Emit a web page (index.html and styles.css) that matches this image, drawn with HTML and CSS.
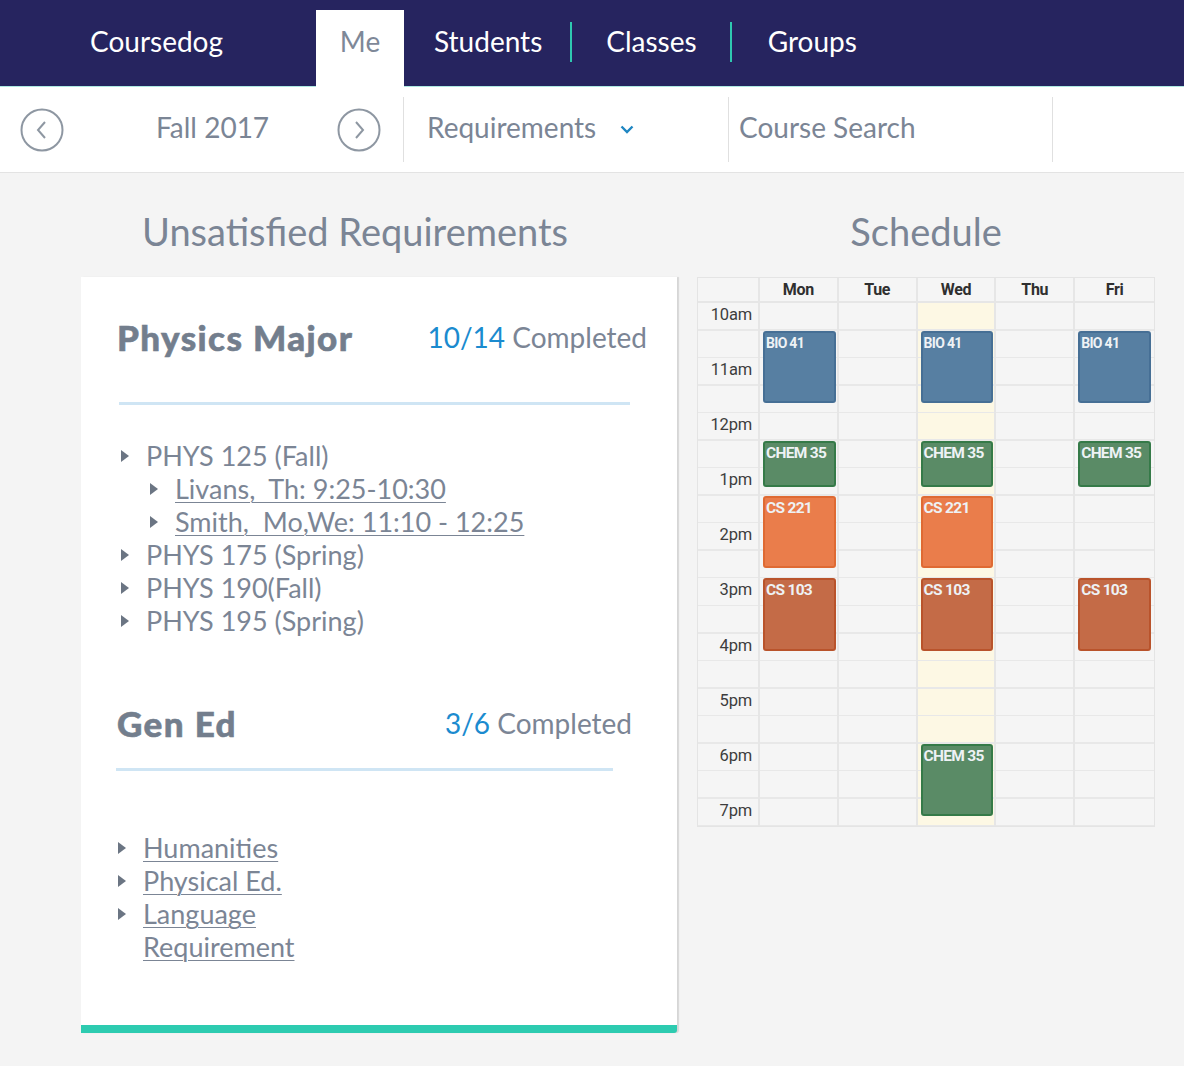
FILE: index.html
```html
<!DOCTYPE html>
<html lang="en">
<head>
<meta charset="utf-8">
<title>Coursedog</title>
<link rel="stylesheet" href="styles.css">
</head>
<body>
<header class="topnav">
  <div class="brand">Coursedog</div>
  <div class="tab tab-active">Me</div>
  <div class="navlink nav-students">Students</div>
  <div class="navsep sep-1"></div>
  <div class="navlink nav-classes">Classes</div>
  <div class="navsep sep-2"></div>
  <div class="navlink nav-groups">Groups</div>
</header>

<nav class="subbar">
  <div class="term">
    <span class="circle-btn">
      <svg viewBox="0 0 44 44" width="44" height="44"><circle cx="22" cy="22" r="20.5" fill="none" stroke="#8e97a2" stroke-width="2"/><path d="M25 14 L18 22 L25 30" fill="none" stroke="#8e97a2" stroke-width="2"/></svg>
    </span>
    <span class="term-label">Fall 2017</span>
    <span class="circle-btn">
      <svg viewBox="0 0 44 44" width="44" height="44"><circle cx="22" cy="22" r="20.5" fill="none" stroke="#8e97a2" stroke-width="2"/><path d="M19 14 L26 22 L19 30" fill="none" stroke="#8e97a2" stroke-width="2"/></svg>
    </span>
  </div>
  <div class="divider"></div>
  <div class="dropdown">
    <span class="sub-label">Requirements</span>
    <svg class="chev" viewBox="0 0 14 9" width="14" height="9"><path d="M1.5 1.5 L7 7 L12.5 1.5" fill="none" stroke="#1f86c2" stroke-width="2.4"/></svg>
  </div>
  <div class="divider"></div>
  <div class="search"><span class="sub-label">Course Search</span></div>
  <div class="divider"></div>
</nav>

<main class="content">
  <section class="left-col">
    <h1 class="page-title title-left">Unsatisfied Requirements</h1>
    <div class="card">
      <div class="req-head head-physics">
        <h2 class="req-name">Physics Major</h2>
        <div class="req-count"><span class="num">10/14</span> Completed</div>
      </div>
      <div class="req-rule rule-physics"></div>
      <ul class="req-list list-physics">
        <li class="item"><span class="tri"></span>PHYS 125 (Fall)</li>
        <li class="item sub"><span class="tri"></span><a href="#">Livans,&nbsp; Th: 9:25-10:30</a></li>
        <li class="item sub"><span class="tri"></span><a href="#">Smith,&nbsp; Mo,We: 11:10 - 12:25</a></li>
        <li class="item"><span class="tri"></span>PHYS 175 (Spring)</li>
        <li class="item"><span class="tri"></span>PHYS 190(Fall)</li>
        <li class="item"><span class="tri"></span>PHYS 195 (Spring)</li>
      </ul>

      <div class="req-head head-gened">
        <h2 class="req-name">Gen Ed</h2>
        <div class="req-count"><span class="num">3/6</span> Completed</div>
      </div>
      <div class="req-rule rule-gened"></div>
      <ul class="req-list list-gened">
        <li class="item"><span class="tri"></span><a href="#">Humanities</a></li>
        <li class="item"><span class="tri"></span><a href="#">Physical Ed.</a></li>
        <li class="item"><span class="tri"></span><a href="#">Language<br>Requirement</a></li>
      </ul>
    </div>
  </section>

  <section class="right-col">
    <h1 class="page-title title-right">Schedule</h1>
    <div class="cal">
      <div class="cal-head">
        <div class="ch"></div>
        <div class="ch">Mon</div>
        <div class="ch">Tue</div>
        <div class="ch">Wed</div>
        <div class="ch">Thu</div>
        <div class="ch">Fri</div>
      </div>
      <div class="cal-body">
        <div class="col col-time"></div>
        <div class="col col-d1"></div>
        <div class="col col-d2"></div>
        <div class="col col-d3 today"></div>
        <div class="col col-d4"></div>
        <div class="col col-d5"></div>

        <div class="tl r1">10am</div>
        <div class="tl r3">11am</div>
        <div class="tl r5">12pm</div>
        <div class="tl r7">1pm</div>
        <div class="tl r9">2pm</div>
        <div class="tl r11">3pm</div>
        <div class="tl r13">4pm</div>
        <div class="tl r15">5pm</div>
        <div class="tl r17">6pm</div>
        <div class="tl r19">7pm</div>

        <div class="ev bio d1 s-bio">BIO 41</div>
        <div class="ev bio d3 s-bio">BIO 41</div>
        <div class="ev bio d5 s-bio">BIO 41</div>
        <div class="ev chem d1 s-chem">CHEM 35</div>
        <div class="ev chem d3 s-chem">CHEM 35</div>
        <div class="ev chem d5 s-chem">CHEM 35</div>
        <div class="ev cs221 d1 s-cs221">CS 221</div>
        <div class="ev cs221 d3 s-cs221">CS 221</div>
        <div class="ev cs103 d1 s-cs103">CS 103</div>
        <div class="ev cs103 d3 s-cs103">CS 103</div>
        <div class="ev cs103 d5 s-cs103">CS 103</div>
        <div class="ev chem d3 s-chem2">CHEM 35</div>
      </div>
    </div>
  </section>
</main>
</body>
</html>
```

FILE: styles.css
```css
* { box-sizing: border-box; }
html, body { margin: 0; padding: 0; }
body {
  background: #f4f4f4;
  font-family: Lato, "Open Sans", "Liberation Sans", sans-serif;
  color: #7b8595;
  width: 1184px;
  min-height: 1066px;
}

/* top navigation */
.topnav {
  display: flex;
  height: 87px;
  background: #26245f;
  border-bottom: 1px solid #aee9e3;
}
.brand {
  width: 316px;
  padding-left: 90px;
  color: #fff;
  font-size: 28px;
  line-height: 82px;
}
.tab {
  width: 88px;
  margin-top: 10px;
  height: 77px;
  margin-bottom: -1px;
  background: #fff;
  text-align: center;
  line-height: 62px;
  font-size: 28px;
  color: #7e8898;
}
.navlink {
  color: #fff;
  font-size: 28px;
  line-height: 82px;
}
.nav-students { margin-left: 30px; }
.nav-classes { margin-left: 34px; }
.nav-groups { margin-left: 36px; }
.navsep {
  width: 2px;
  height: 40px;
  margin-top: 22px;
  background: #2fc8b0;
}
.sep-1 { margin-left: 28px; }
.sep-2 { margin-left: 33px; }

/* sub bar */
.subbar {
  display: flex;
  align-items: center;
  height: 86px;
  background: #fff;
  border-bottom: 1px solid #e3e3e3;
}
.term {
  display: flex;
  align-items: center;
  width: 403px;
  padding-left: 20px;
}
.circle-btn { display: block; width: 44px; height: 44px; }
.circle-btn svg { display: block; }
.term-label {
  font-size: 28px;
  width: 273px;
  padding-left: 92px;
  color: #7b8595;
  position: relative;
  top: -3px;
}
.divider {
  width: 1px;
  height: 65px;
  background: #e0e0e0;
}
.dropdown {
  width: 324px;
  display: flex;
  align-items: center;
  padding-left: 23px;
}
.chev { margin-left: 24px; margin-top: 0; }
.sub-label { font-size: 28px; color: #7b8595; position: relative; top: -3px; }
.search {
  width: 323px;
  padding-left: 10px;
}

/* content */
.content {
  display: flex;
  padding: 35px 0 0 81px;
}
.page-title {
  margin: 0;
  font-weight: 400;
  font-size: 38px;
  line-height: 46px;
  height: 46px;
  margin-bottom: 23px;
  color: #7b8595;
}
.left-col { width: 596px; }
.title-left { padding-left: 61px; }
.right-col { width: 458px; margin-left: 20px; }
.title-right { text-align: center; }

.card {
  background: #fff;
  height: 756px;
  border-bottom: 8px solid #2dcbb0;
  border-bottom-right-radius: 3px;
  box-shadow: 2px 0 1px rgba(0,0,0,0.12);
  padding-top: 39px;
}
.req-head {
  display: flex;
  justify-content: space-between;
  align-items: center;
  height: 42px;
  padding-left: 36px;
}
.head-physics { padding-right: 30px; }
.head-gened { padding-right: 45px; margin-top: 65px; }
.req-name {
  margin: 0;
  font-size: 35px;
  font-weight: 900;
  letter-spacing: 1.4px;
  color: #737e8d;
  -webkit-text-stroke: 0.6px #737e8d;
}
.req-count { font-size: 28px; color: #7b8595; }
.req-count .num { color: #1b8bcf; }
.req-rule {
  height: 3px;
  background: #cfe5f4;
}
.rule-physics { margin: 44px 47px 0 38px; }
.rule-gened { margin: 24px 64px 0 35px; }

.req-list {
  list-style: none;
  margin: 0;
  padding: 0;
}
.list-physics { margin-top: 34px; padding-left: 40px; }
.list-gened { margin-top: 60px; padding-left: 37px; }
.item {
  position: relative;
  font-size: 27px;
  line-height: 33px;
  padding-left: 25px;
  color: #7b8595;
}
.item.sub { margin-left: 29px; }
.item a { color: #7b8595; text-decoration: underline; text-decoration-thickness: 1px; text-underline-offset: 3px; }
.tri {
  position: absolute;
  left: 0;
  top: 11px;
  width: 0;
  height: 0;
  border-top: 6px solid transparent;
  border-bottom: 6px solid transparent;
  border-left: 8px solid #6b7583;
}

/* calendar */
.cal {
  width: 458px;
  border: 1px solid #e4e4e4;
  background: #f5f5f5;
  font-family: Roboto, "Liberation Sans", sans-serif;
}
.cal-head {
  display: grid;
  grid-template-columns: 62px repeat(5, 1fr);
  height: 25px;
  border-bottom: 2px solid #e6e6e6;
}
.ch {
  border-right: 2px solid #e6e6e6;
  text-align: center;
  font-weight: 700;
  font-size: 16px;
  line-height: 24px;
  color: #2f2f2f;
  letter-spacing: -0.3px;
}
.ch:last-child { border-right: none; }
.cal-body {
  display: grid;
  grid-template-columns: 62px repeat(5, 1fr);
  grid-template-rows: repeat(19, 27.55px);
}
.col {
  grid-row: 1 / -1;
  border-right: 2px solid #e6e6e6;
  background-image: repeating-linear-gradient(to bottom, transparent 0, transparent 26.05px, #e8e8e8 26.05px, #e8e8e8 27.55px);
}
.col-time { grid-column: 1; }
.col-d1 { grid-column: 2; }
.col-d2 { grid-column: 3; }
.col-d3 { grid-column: 4; }
.col-d4 { grid-column: 5; }
.col-d5 { grid-column: 6; border-right: none; }
.today { background-color: #fdf8e4; }

.tl {
  grid-column: 1;
  text-align: right;
  padding-right: 8px;
  font-size: 16.5px;
  line-height: 24px;
  color: #3d3d3d;
  letter-spacing: -0.2px;
}
.r1 { grid-row: 1; }
.r3 { grid-row: 3; }
.r5 { grid-row: 5; }
.r7 { grid-row: 7; }
.r9 { grid-row: 9; }
.r11 { grid-row: 11; }
.r13 { grid-row: 13; }
.r15 { grid-row: 15; }
.r17 { grid-row: 17; }
.r19 { grid-row: 19; }

.ev {
  margin: 0 3px 0 3px;
  border-radius: 3px;
  color: #eef2f5;
  font-size: 15.5px;
  font-weight: 700;
  letter-spacing: -0.7px;
  line-height: 18px;
  padding: 1px 1px;
  z-index: 1;
}
.d1 { grid-column: 2; }
.d3 { grid-column: 4; }
.d5 { grid-column: 6; }
.bio { background: #577fa2; border: 2px solid #466f95; font-size: 14px; }
.chem { background: #5a8b66; border: 2px solid #357a48; }
.cs221 { background: #ea7d4b; border: 2px solid #df6a33; }
.cs103 { background: #c46b47; border: 2px solid #b9532b; }
.s-bio { grid-row: 2 / 5; margin-bottom: 10px; }
.s-chem { grid-row: 6 / 8; margin-bottom: 9px; }
.s-cs221 { grid-row: 8 / 11; margin-bottom: 10px; }
.s-cs103 { grid-row: 11 / 14; margin-bottom: 10px; }
.s-chem2 { grid-row: 17 / 20; margin-bottom: 10px; }
```
